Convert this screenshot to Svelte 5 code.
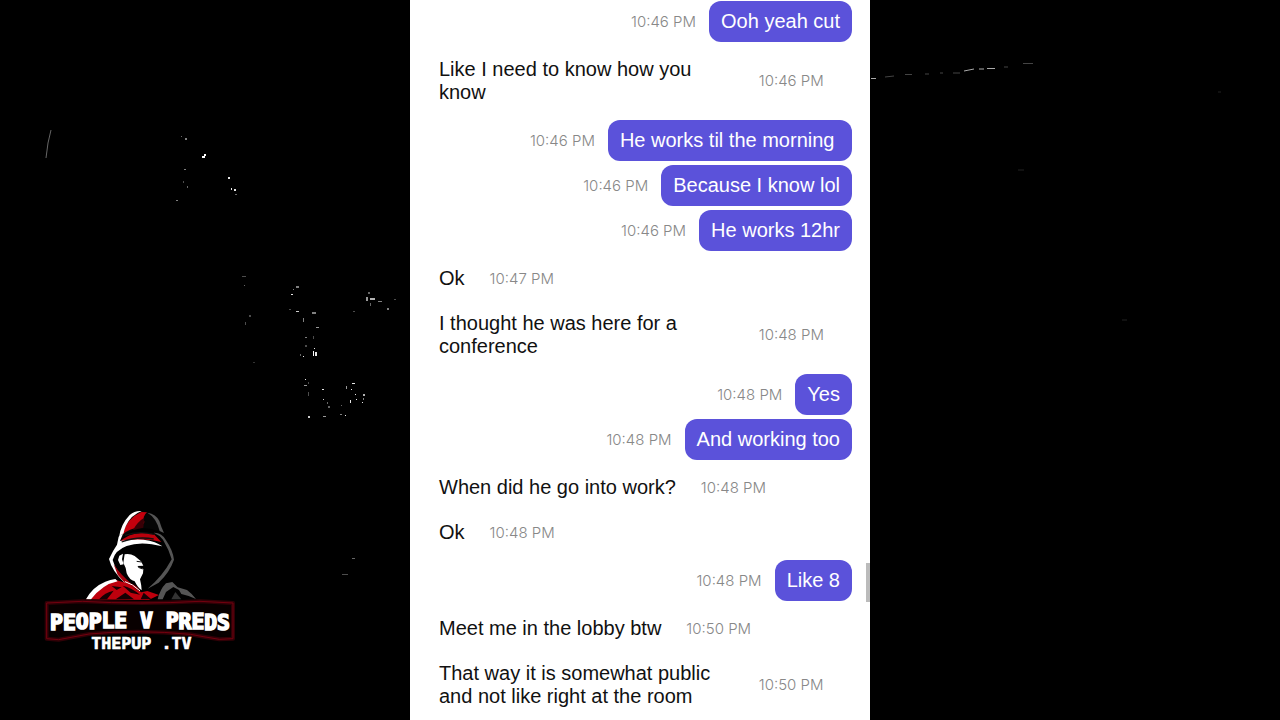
<script lang="ts">
	type Message = { text: string; time: string; mine?: boolean };

	// Consecutive messages from one sender sit in the same group.
	const groups: Message[][] = [
		[{ text: 'Ooh yeah cut', time: '10:46 PM', mine: true }],
		[{ text: 'Like I need to know how you know', time: '10:46 PM' }],
		[
			{ text: 'He works til the morning\u00a0', time: '10:46 PM', mine: true },
			{ text: 'Because I know lol', time: '10:46 PM', mine: true },
			{ text: 'He works 12hr', time: '10:46 PM', mine: true }
		],
		[
			{ text: 'Ok', time: '10:47 PM' },
			{ text: 'I thought he was here for a conference', time: '10:48 PM' }
		],
		[
			{ text: 'Yes', time: '10:48 PM', mine: true },
			{ text: 'And working too', time: '10:48 PM', mine: true }
		],
		[
			{ text: 'When did he go into work?', time: '10:48 PM' },
			{ text: 'Ok', time: '10:48 PM' }
		],
		[{ text: 'Like 8', time: '10:48 PM', mine: true }],
		[
			{ text: 'Meet me in the lobby btw', time: '10:50 PM' },
			{ text: 'That way it is somewhat public and not like right at the room', time: '10:50 PM' }
		]
	];

	// x, y, width, height, opacity of the stray highlights on the backdrop
	const specks = [
		[202, 156, 3, 2, 1], [204, 154, 2, 2, 1], [185, 138, 2, 2, 0.5], [181, 136, 1, 1, 0.4],
		[184, 169, 2, 1, 0.5], [183, 181, 1, 2, 0.3], [187, 186, 1, 2, 0.4], [176, 200, 2, 1, 0.5],
		[228, 177, 2, 2, 0.9], [231, 188, 1, 2, 0.9], [234, 189, 2, 2, 0.9], [235, 194, 2, 1, 0.4],
		[242, 276, 4, 1, 0.3], [244, 285, 1, 1, 0.4], [249, 315, 2, 2, 0.3], [245, 322, 1, 3, 0.3],
		[296, 286, 3, 2, 0.5], [291, 294, 2, 1, 0.9], [293, 289, 1, 1, 0.5], [296, 311, 3, 1, 0.8],
		[289, 309, 2, 1, 0.3], [303, 318, 1, 4, 0.5], [312, 312, 4, 2, 0.5], [316, 327, 3, 1, 0.6],
		[305, 337, 2, 1, 0.5], [313, 336, 1, 3, 0.3], [305, 345, 2, 2, 0.3], [314, 348, 1, 1, 0.9],
		[313, 351, 1, 5, 1], [315, 352, 2, 4, 0.9], [303, 356, 1, 1, 0.9], [300, 354, 1, 2, 0.4],
		[305, 379, 1, 1, 0.9], [304, 385, 3, 1, 0.6], [308, 382, 1, 2, 0.3], [308, 392, 1, 4, 0.3],
		[308, 416, 2, 2, 0.8], [322, 389, 2, 1, 0.9], [323, 399, 1, 1, 0.8], [327, 402, 1, 2, 0.4],
		[323, 416, 3, 1, 0.6], [328, 406, 2, 2, 0.4], [346, 386, 1, 3, 0.6], [352, 383, 3, 1, 0.9],
		[351, 389, 1, 1, 0.9], [355, 394, 1, 1, 0.9], [350, 400, 1, 3, 0.9], [356, 399, 1, 1, 0.9],
		[363, 394, 2, 2, 0.7], [363, 398, 1, 2, 0.5], [362, 402, 1, 1, 0.9], [345, 415, 1, 1, 0.9],
		[340, 414, 2, 1, 0.5], [341, 405, 1, 1, 0.4], [366, 297, 2, 4, 0.6], [370, 298, 5, 2, 0.7],
		[370, 303, 1, 3, 0.4], [378, 301, 4, 1, 0.5], [387, 308, 2, 2, 0.5], [368, 292, 2, 2, 0.4],
		[394, 299, 2, 1, 0.3], [353, 311, 2, 1, 0.3], [253, 362, 2, 1, 0.2],
		[352, 558, 3, 1, 0.4], [342, 574, 6, 1, 0.3]
	];
</script>

<svelte:head>
	<title>Chat</title>
</svelte:head>

<div class="stage">
	<svg class="backdrop" width="1280" height="720" aria-hidden="true">
		{#each specks as [x, y, w, h, o]}
			<rect {x} {y} width={w} height={h} fill="#fff" opacity={o} />
		{/each}
		<path d="M51 130L48 143L46 158" fill="none" stroke="#666" stroke-width="1" />
		<g fill="none" stroke="#aaa" stroke-width="1">
			<path d="M871 78.500h5M964 71l10-2M979 69h5M987 68.500h8" />
			<path
				d="M885 77l9-1M905 74.500h7M925 74h4M940 73h3M953 73h7M1004 67h4M1023 63.500h10"
				stroke="#444"
			/>
			<path d="M1018 170h6M1122 320h5M1218 92h3" stroke="#222" />
		</g>
	</svg>

	<aside class="brand">
		<svg viewBox="0 0 660 480" role="img" aria-label="People V Preds, thepup.tv">
			<!-- hood -->
			<path d="M270 122Q263 112 274 91Q287 54 309 40Q326 30 346 36Q371 37 388 58L401 94L375 90Q344 79 308 91Q283 104 270 122Z" fill="#050505" />
			<path d="M276 106Q290 55 334 36L351 37Q337 48 343 67Q337 73 337 82Q298 83 276 106Z" fill="#c4000d" />
			<path d="M309 90Q323 64 343 53L340 83Z" fill="#380006" />
			<path d="M267 112Q272 73 299 45Q315 31 335 33Q303 45 288 77Q281 93 281 100Q270 104 268 121Z" fill="#fff" />
			<path d="M352 38Q378 42 388 63Q393 80 402 99L389 93Q379 53 352 38Z" fill="#555" />
			<path d="M267 129Q302 88 372 103L394 126Q325 106 267 139Z" fill="#b9000c" />
			<path d="M266 110L279 101L270 123Q302 117 341 119Q379 124 397 139Q333 122 290 138Q255 151 248 180Q258 215 292 250L285 250Q245 212 237 177Q249 151 261 134Z" fill="#fff" />
			<path d="M285 106Q325 91 372 103M275 126Q321 108 371 117" fill="none" stroke="#111" stroke-width="4" />
			<path d="M371 98Q394 97 407 119Q429 151 432 179Q419 217 386 248L353 266Q397 230 425 178Q417 149 399 119Q387 104 371 98Z" fill="#555" />
			<path d="M251 193Q273 226 304 251Q322 258 330 271Q293 263 263 224Z" fill="#a7000c" />
			<path d="M285 245Q306 250 330 273" fill="none" stroke="#fff" stroke-width="3" />

			<!-- face -->
			<path d="M264 180L268 167L279 161L276 178L281 193L271 195Z" fill="#fff" />
			<path d="M284 163Q300 160 314 168L333 184L340 197L322 198L326 202L340 207L339 220L330 238Q334 253 335 271Q323 263 314 244Q298 240 290 220L287 204L280 188Z" fill="#fff" />
			<path d="M320 184l15 2M325 202l13 5" stroke="#111" stroke-width="3" />

			<!-- shoulders -->
			<path d="M168 298Q195 258 255 239L287 248L334 277L352 273L387 285L356 300Z" fill="#be000d" />
			<path d="M168 298Q187 261 226 245Q241 239 256 237L263 244Q218 253 183 298Z" fill="#fff" />
			<path d="M207 298Q224 277 251 272L231 298ZM257 298L286 278L312 298ZM278 257Q305 263 330 284L302 278ZM245 258l30 4-15 8ZM332 298l9-20 23 20Z" fill="#170003" />
			<path d="M383 298Q390 268 408 250L427 246L443 262L471 270Q486 281 498 297L476 288L454 282L447 270L430 261L408 276L398 298Z" fill="#555" />
			<path d="M424 298L436 276L454 298Z" fill="#333" />

			<!-- name plate -->
			<path
				d="M50 309L157 304Q330 314 510 304L609 309V416L568 418Q519 410 481 403Q327 388 177 402L86 419L50 416Z"
				fill="#080000"
				stroke="#300006"
				stroke-width="12"
				stroke-linejoin="round"
			/>
			<path
				d="M50 309L157 304Q330 314 510 304L609 309V416L568 418Q519 410 481 403Q327 388 177 402L86 419L50 416Z"
				fill="none"
				stroke="#74000f"
				stroke-width="3"
			/>
			<text
				class="name"
				x="330"
				y="391"
				dy="0 -2 -2 -1 -1 -1 0 0 0 1 1 1 2 2"
				text-anchor="middle">PEOPLE V PREDS</text
			>
			<text class="site" x="334" y="447" text-anchor="middle">THEPUP .TV</text>
		</svg>
	</aside>

	<main class="chat">
		{#each groups as group}
			<section class="group">
				{#each group as message}
					<div class="row" class:mine={message.mine}>
						<p class="bubble">{message.text}</p>
						<time>{message.time}</time>
					</div>
				{/each}
			</section>
		{/each}
		<span class="thumb"></span>
	</main>
</div>

<style>
	:global(body) {
		background: #000;
	}
	.stage {
		position: relative;
		display: grid;
		grid-template-columns: 1fr minmax(0, 460px) 1fr;
		height: 100vh;
		overflow: hidden;
		background: #000;
		font-family: 'Liberation Sans', Arial, sans-serif;
	}
	.backdrop {
		position: absolute;
		top: 0;
		left: 0;
	}

	.brand {
		align-self: end;
		padding: 0 0 60px 30px;
	}
	.brand svg {
		display: block;
		position: relative;
		width: 220px;
		max-width: 100%;
	}
	.name,
	.site {
		font-family: 'DejaVu Sans Mono', monospace;
		font-weight: 700;
		fill: #fff;
		stroke: #fff;
	}
	.name {
		font-size: 64px;
		stroke-width: 5px;
	}
	.site {
		font-size: 50px;
		stroke-width: 2px;
	}

	.chat {
		grid-column: 2;
		position: relative;
		display: flex;
		flex-direction: column;
		gap: 7px;
		box-sizing: border-box;
		min-height: 100vh;
		padding: 1px 18px 0 17px;
		background: #fff;
	}
	.group {
		display: flex;
		flex-direction: column;
		gap: 4px;
	}
	.row {
		display: flex;
		align-items: center;
		gap: 13px;
	}
	.row.mine {
		flex-direction: row-reverse;
	}
	.bubble {
		box-sizing: border-box;
		max-width: 75%;
		margin: 0;
		padding: 9px 12px;
		border-radius: 12px;
		font-size: 20px;
		line-height: 23px;
		color: #111;
	}
	.mine .bubble {
		background: #5b52da;
		color: #fff;
	}
	time {
		font-family: Inter, 'Liberation Sans', sans-serif;
		font-size: 15px;
		font-weight: 300;
		line-height: 20px;
		color: #888;
		white-space: nowrap;
	}
	.thumb {
		position: absolute;
		top: 563px;
		right: 0;
		width: 4px;
		height: 39px;
		background: #bbb;
	}
</style>
